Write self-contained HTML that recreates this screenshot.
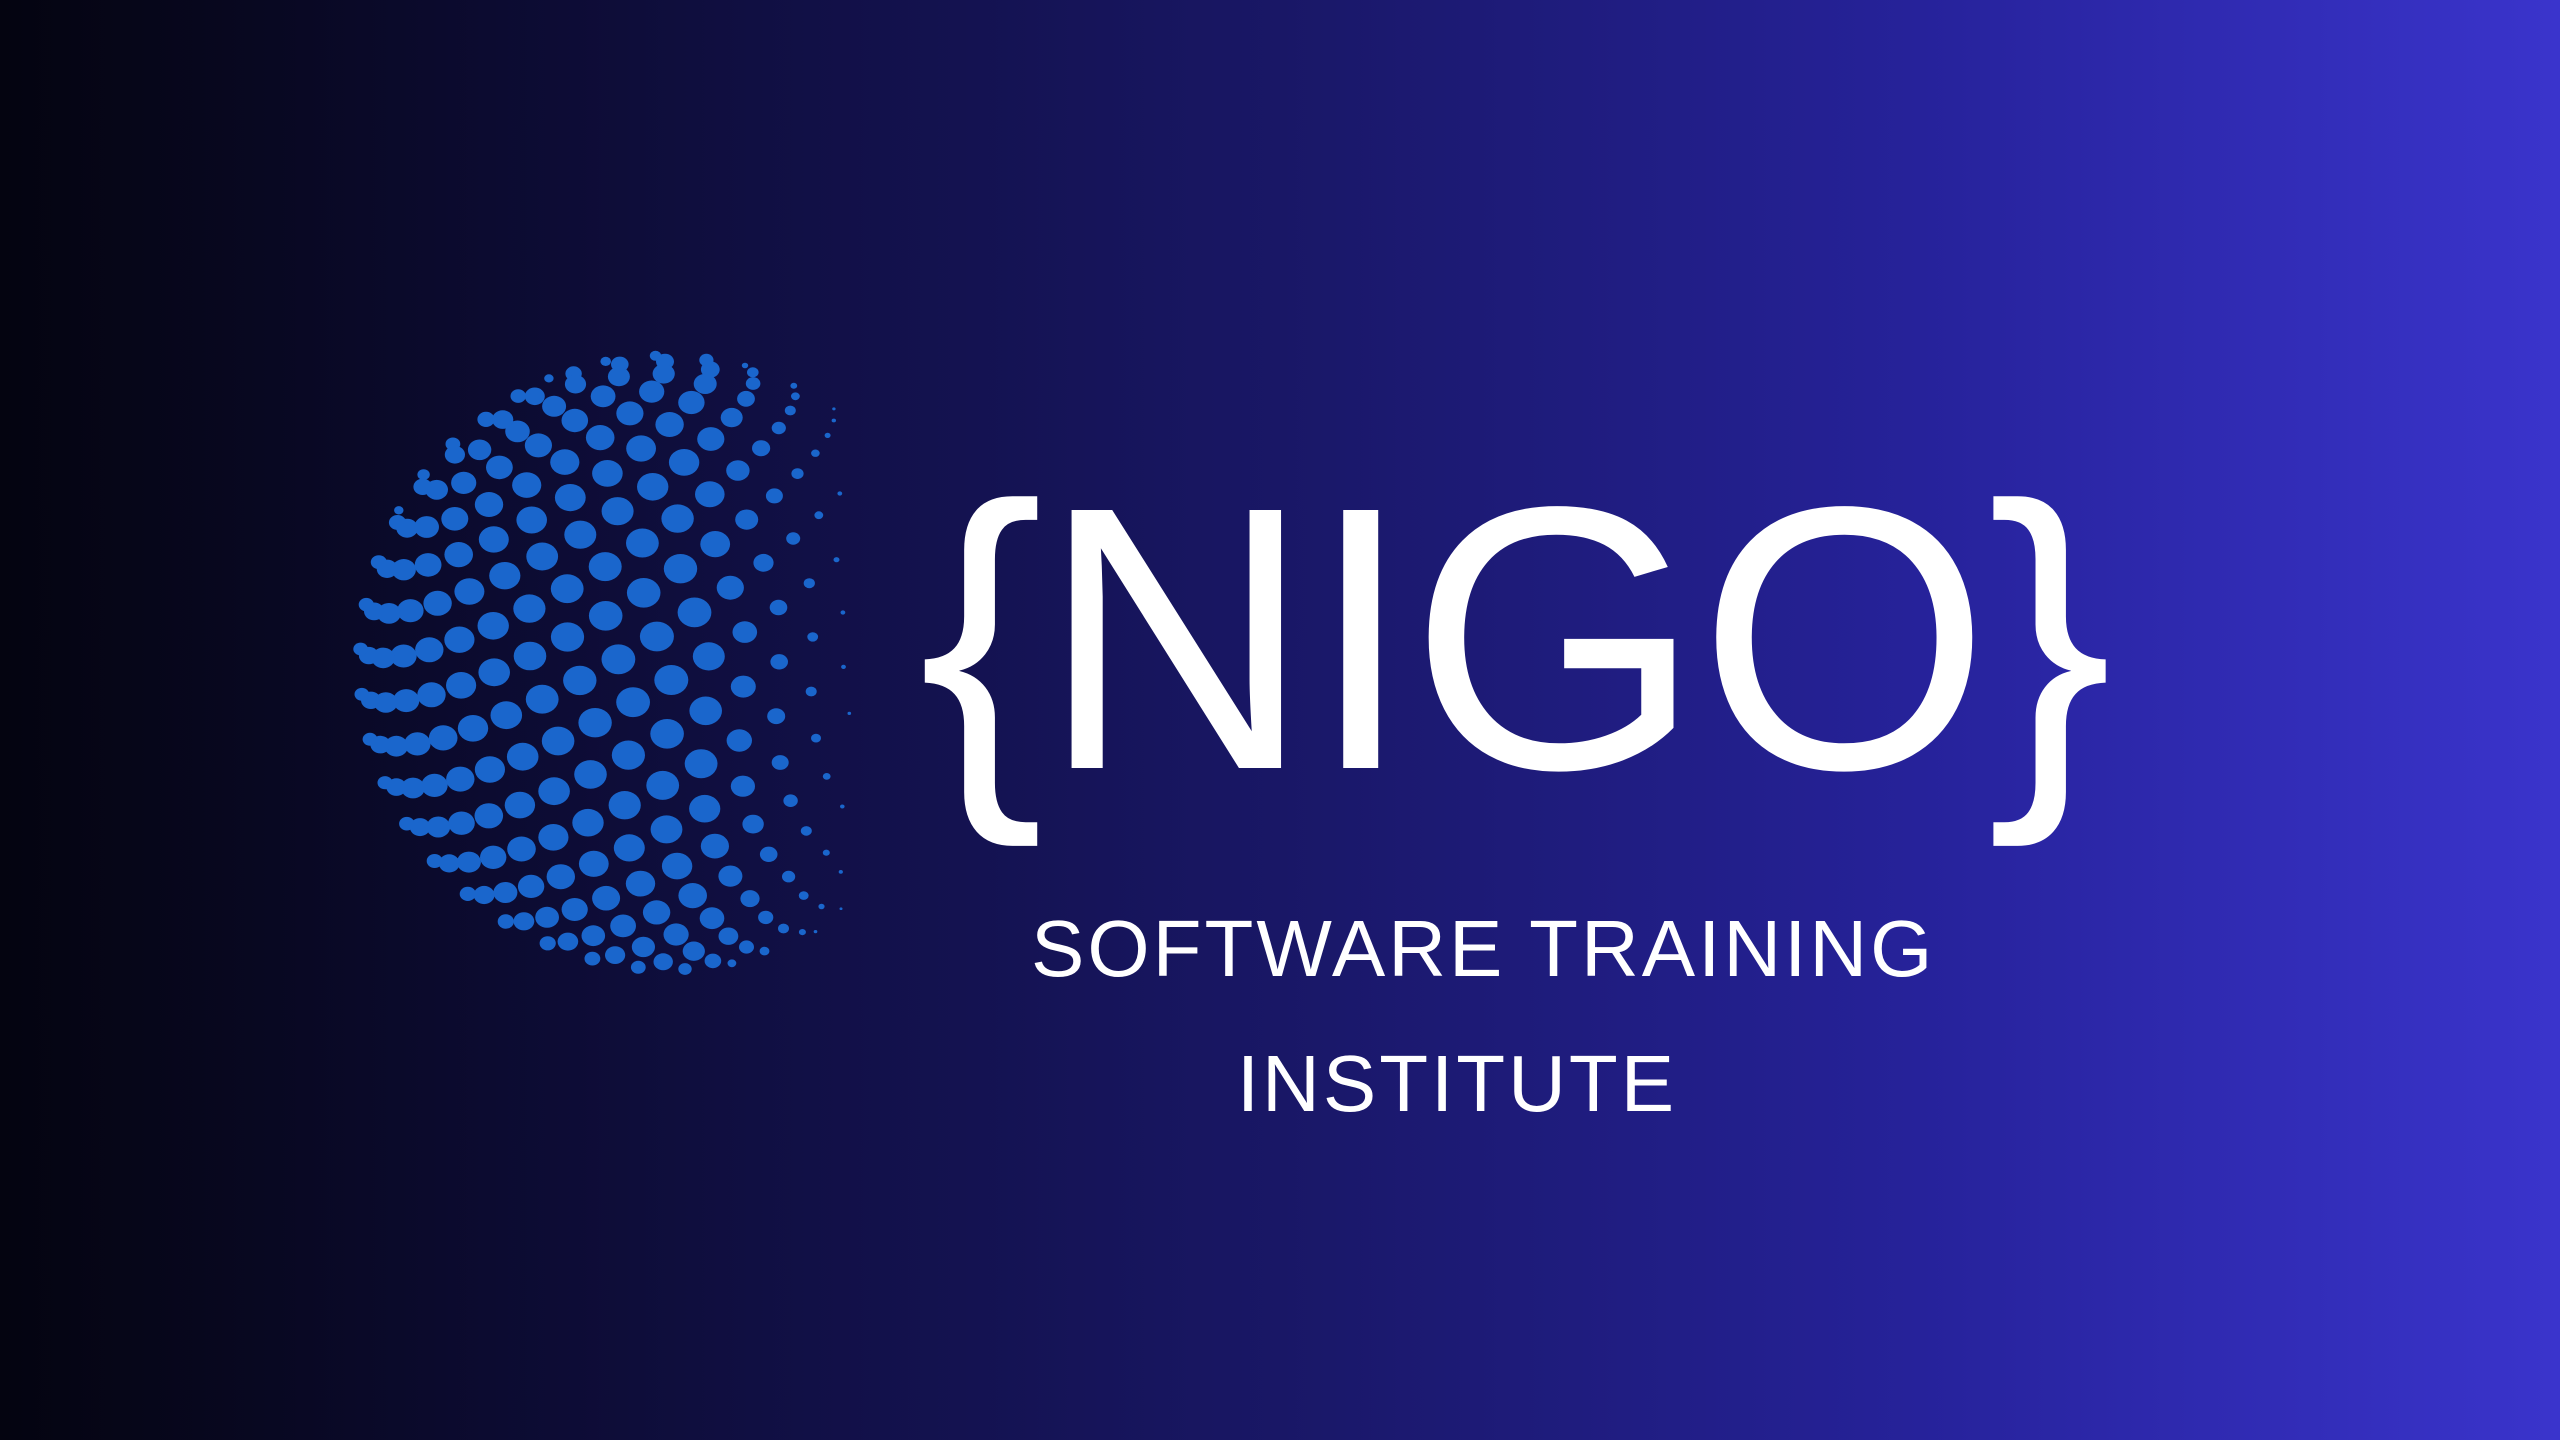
<!DOCTYPE html>
<html><head><meta charset="utf-8"><style>
html,body{margin:0;padding:0;}
body{width:2560px;height:1440px;overflow:hidden;position:relative;
background:linear-gradient(90deg,#040410 0%,#0d0c35 22%,#191766 50%,#26229a 75%,#3a34cc 100%);
font-family:"Liberation Sans",sans-serif;color:#fff;}
#g{position:absolute;left:0;top:0;}
.t{position:absolute;white-space:nowrap;text-align:center;}
#nigo{left:914px;width:1200px;top:452px;font-size:375px;line-height:1;letter-spacing:-3px;}
.s{width:800px;font-size:80px;line-height:1;letter-spacing:3px;}
</style></head><body>
<svg id="g" width="2560" height="1440"></svg>
<div class="t" id="nigo">{NIGO}</div>
<div class="t s" style="top:909px;left:1031px">SOFTWARE TRAINING</div>
<div class="t s" style="top:1044px;left:1057px">INSTITUTE</div>
<script>
function n(v){var l=Math.hypot(v[0],v[1],v[2]);return [v[0]/l,v[1]/l,v[2]/l];}
function cr(a,b){return [a[1]*b[2]-a[2]*b[1],a[2]*b[0]-a[0]*b[2],a[0]*b[1]-a[1]*b[0]];}
var s=document.getElementById('g'),cx=666,cy=663,R=308,h='';
var P=n([-0.5,-0.82,0.22]),E1=n(cr(P,[0,0,1])),E2=cr(P,E1);
var st=0.145;
for(var a=-Math.PI/2+st;a<Math.PI/2;a+=st){
 var c=Math.cos(a),m=Math.max(1,Math.round(2*Math.PI*c/st));
 for(var k=0;k<m;k++){var b=2*Math.PI*k/m+a*0.3;
  var p=[0,1,2].map(function(i){return Math.sin(a)*P[i]+c*(Math.cos(b)*E1[i]+Math.sin(b)*E2[i]);});
  if(p[2]<0.03)continue;
  var x1=p[0];if(x1>0.66)continue;
  var f=Math.min(1,(0.66-x1)/0.55);
  var r=17*Math.pow(p[2],0.4)*f;
  if(r<1.3)continue;
  h+='<ellipse cx="'+(cx+p[0]*R).toFixed(1)+'" cy="'+(cy+p[1]*R).toFixed(1)+'" rx="'+r.toFixed(1)+'" ry="'+(r*0.88).toFixed(1)+'" fill="#1a66cc"/>';
 }}
s.innerHTML=h;
</script>
</body></html>
